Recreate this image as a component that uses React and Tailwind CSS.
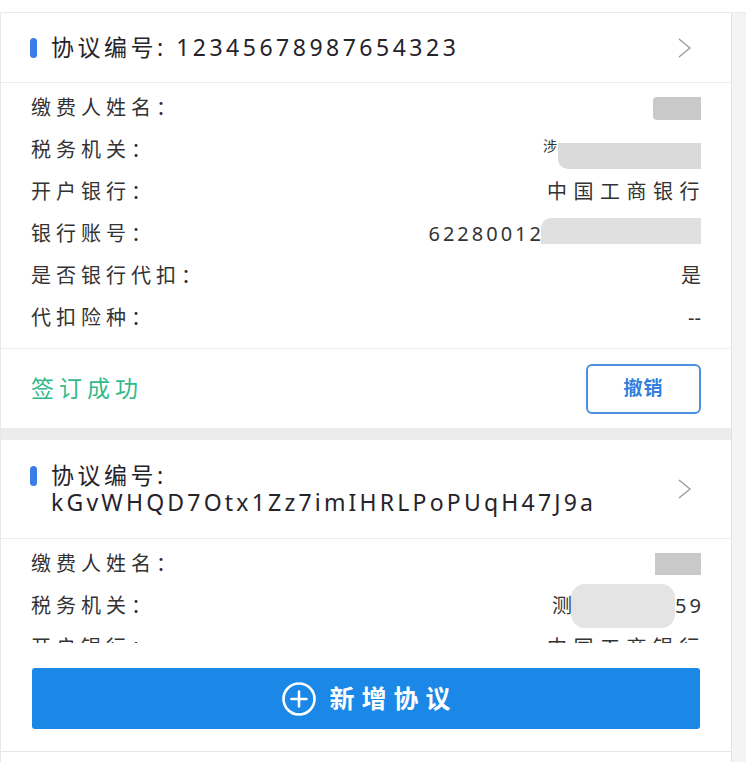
import { Fragment } from 'react';

const font = { fontFamily: '"Noto Sans", "Noto Sans CJK SC", sans-serif' };

const Chevron = () => (
  <svg width="16" height="22" viewBox="0 0 16 22" fill="none" className="shrink-0">
    <polyline points="2,2 13,11 2,20" stroke="#9a9a9a" strokeWidth="1.3" fill="none" />
  </svg>
);

const Row = ({ label, children }) => (
  <div className="flex h-[42px] items-center justify-between">
    <span className="text-[20px] tracking-[5px] text-[#333]">{label}</span>
    <div className="flex items-center text-[20px] tracking-[5px] text-[#333]">{children}</div>
  </div>
);

const CardHeader = ({ children, tall }) => (
  <div
    className={`flex items-center justify-between border-b border-[#ededed] pl-[29px] pr-[38px] ${
      tall ? 'h-[99px]' : 'h-[70px]'
    }`}
  >
    <div className="flex items-start gap-[14px]">
      <span className="w-[7px] h-[20px] rounded-full bg-[#3a7de8] shrink-0 mt-[4px]" />
      <div className="text-[23px] leading-[27px] tracking-[3.5px] text-[#26232b]">{children}</div>
    </div>
    <Chevron />
  </div>
);

export default function App() {
  return (
    <div className="w-[746px] h-[762px] bg-white overflow-hidden flex flex-col" style={font}>
      {/* top strip */}
      <div className="h-[13px] border-b border-[#eaeaea] shrink-0" />

      <div className="flex flex-1 min-h-0">
        <div className="w-[731px] flex flex-col border-l border-[#e8e8e8]">
          {/* scrolling list */}
          <div className="h-[630px] overflow-hidden">
            {/* card 1 */}
            <div className="bg-white">
              <CardHeader>协议编号: 12345678987654323</CardHeader>
              <div className="px-[30px] pt-[4px] pb-[9px] border-b border-[#ededed]">
                <Row label="缴费人姓名：">
                  <span className="w-[48px] h-[23px] bg-[#c9c9c9] rounded-l-[4px] block" />
                </Row>
                <Row label="税务机关：">
                  <span className="text-[14px] tracking-normal mr-[1px] -mt-[10px]">涉</span>
                  <span className="w-[143px] h-[26px] bg-[#dadada] rounded-bl-[10px] block mt-[12px]" />
                </Row>
                <Row label="开户银行：">
                  <span className="-mr-[5px] tracking-[6.5px]">中国工商银行</span>
                </Row>
                <Row label="银行账号：">
                  <span className="tracking-[3px]">62280012</span>
                  <span className="w-[160px] h-[26px] bg-[#e0e0e0] rounded-tl-[10px] block -ml-[3px] -mt-[6px]" />
                </Row>
                <Row label="是否银行代扣：">
                  <span className="-mr-[5px]">是</span>
                </Row>
                <Row label="代扣险种：">
                  <span className="tracking-normal">--</span>
                </Row>
              </div>
              <div className="h-[79px] px-[30px] flex items-center justify-between">
                <span className="text-[23px] tracking-[5px] text-[#34b98a]">签订成功</span>
                <button className="w-[115px] h-[50px] border-2 border-[#4a8fe2] rounded-[6px] text-[19px] font-bold tracking-[1px] text-[#2f7fe0]">
                  撤销
                </button>
              </div>
            </div>

            <div className="h-[12px] bg-[#ececec]" />

            {/* card 2 */}
            <div className="bg-white">
              <CardHeader tall>
                <Fragment>
                  <div>协议编号:</div>
                  <div className="tracking-[3.2px]">kGvWHQD7Otx1Zz7imIHRLPoPUqH47J9a</div>
                </Fragment>
              </CardHeader>
              <div className="px-[30px] pt-[4px]">
                <Row label="缴费人姓名：">
                  <span className="w-[46px] h-[22px] bg-[#c9c9c9] block" />
                </Row>
                <Row label="税务机关：">
                  <span>测</span>
                  <span className="w-[104px] h-[44px] bg-[#e4e4e4] rounded-[14px] block -ml-[6px]" />
                  <span className="tracking-[3px] -mr-[3px]">59</span>
                </Row>
                <Row label="开户银行：">
                  <span className="-mr-[5px] tracking-[6.5px]">中国工商银行</span>
                </Row>
              </div>
            </div>
          </div>

          {/* fixed footer */}
          <div className="flex-1 border-b border-[#e6e6e6] px-[31px] pt-[25px]">
            <button className="w-full h-[61px] bg-[#1b87e6] rounded-[3px] flex items-center justify-center gap-[12px] text-white">
              <svg width="36" height="36" viewBox="0 0 36 36" fill="none">
                <circle cx="18" cy="18" r="15.5" stroke="white" strokeWidth="2.6" />
                <path d="M18 10.5v15M10.5 18h15" stroke="white" strokeWidth="2.6" strokeLinecap="round" />
              </svg>
              <span className="text-[25px] font-bold tracking-[7px] -mr-[7px]">新增协议</span>
            </button>
          </div>
          <div className="h-[10px] shrink-0" />
        </div>

        {/* right scrollbar strip */}
        <div className="w-[15px] bg-[#f3f4f6] border-l border-[#e2e2e2]" />
      </div>
    </div>
  );
}
